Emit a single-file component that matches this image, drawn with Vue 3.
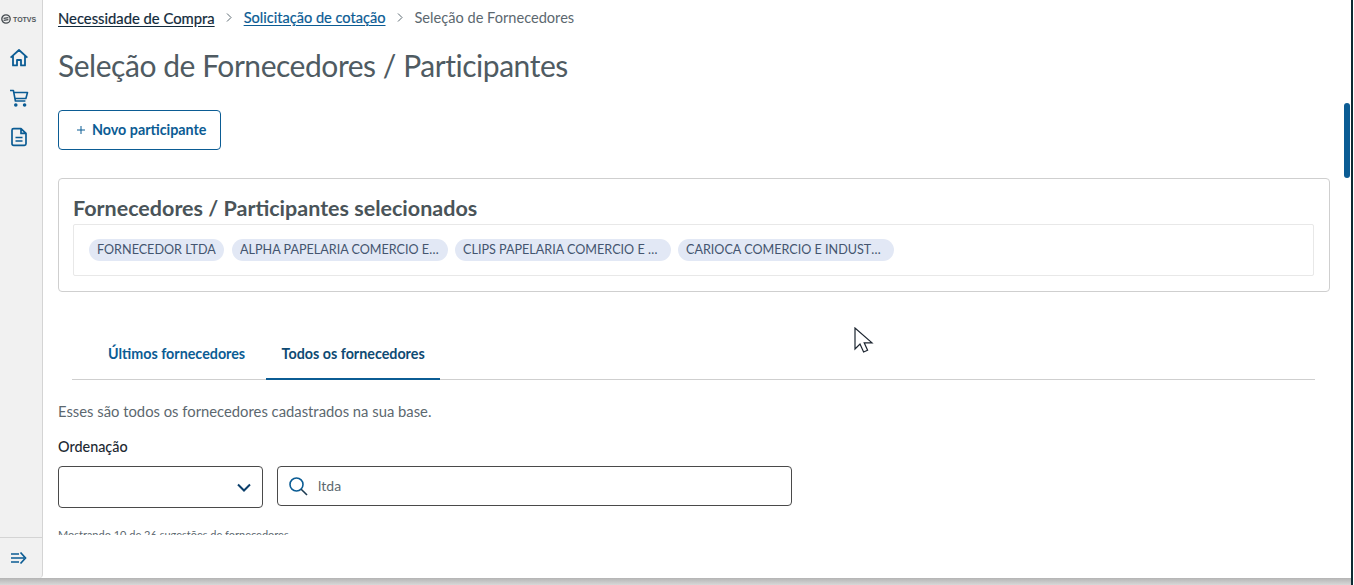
<script setup>
const chips = [
  { label: 'FORNECEDOR LTDA', width: 135 },
  { label: 'ALPHA PAPELARIA COMERCIO E SERVICOS', width: 216 },
  { label: 'CLIPS PAPELARIA COMERCIO E SERVICOS', width: 216 },
  { label: 'CARIOCA COMERCIO E INDUSTRIA LTDA', width: 216 },
]
</script>

<template>
  <div class="screen">
    <div class="window">
      <aside class="sidebar">
        <div class="logo">
          <svg width="10" height="10" viewBox="0 0 10 10" fill="none" stroke="#454b50" stroke-width="1.3">
            <circle cx="5" cy="5" r="4.200" />
            <path d="M2.600 4.400 7.400 3.600M2.600 6.400 7.400 5.600" />
          </svg>
          <span>TOTVS</span>
        </div>
        <nav class="side-nav">
          <a class="side-item">
            <svg width="20" height="20" viewBox="0 0 20 20" fill="none" stroke="#0b5c94" stroke-width="1.8" stroke-linejoin="round">
              <path d="M1.600 9.600 10 2l8.400 7.600M4 8v9.400h4V12h4v5.400h4V8" />
            </svg>
          </a>
          <a class="side-item">
            <svg width="20" height="20" viewBox="0 0 20 20" fill="none" stroke="#0b5c94" stroke-width="1.600" stroke-linejoin="round">
              <path d="M1 2.500h3.400l2 10.500h10M5 4.500h13.500l-1.600 6H6" />
              <circle cx="6.800" cy="17" r="1" fill="#0b5c94" />
              <circle cx="15.600" cy="17" r="1" fill="#0b5c94" />
            </svg>
          </a>
          <a class="side-item side-item-doc">
            <svg width="20" height="20" viewBox="0 0 20 20" fill="none" stroke="#0b5c94" stroke-width="1.700" stroke-linejoin="round">
              <path d="M3 3.200Q3 1.600 4.600 1.600H12L17 6.400v10.400q0 1.600-1.600 1.600H4.600Q3 18.400 3 16.800ZM12 1.600v4.800h5M6.500 10.500h7M6.500 14h7" />
            </svg>
          </a>
        </nav>
        <div class="side-foot">
          <svg width="16" height="14" viewBox="0 0 16 14" fill="none" stroke="#0b5c94" stroke-width="1.700">
            <path d="M0 3h8M0 7h13M0 11h8M9.500 1.500 14.500 7l-5 5.500" />
          </svg>
        </div>
      </aside>

      <main class="content">
        <div class="breadcrumb">
          <a class="crumb crumb-dark">Necessidade de Compra</a>
          <svg class="sep" width="6" height="9" viewBox="0 0 6 9" fill="none" stroke="#5c6a72" stroke-width="1">
            <path d="M1 .5l4 4-4 4" />
          </svg>
          <a class="crumb crumb-link">Solicitação de cotação</a>
          <svg class="sep" width="6" height="9" viewBox="0 0 6 9" fill="none" stroke="#5c6a72" stroke-width="1">
            <path d="M1 .5l4 4-4 4" />
          </svg>
          <span class="crumb-current">Seleção de Fornecedores</span>
        </div>

        <h1 class="page-title">Seleção de Fornecedores / Participantes</h1>

        <button class="btn-new">
          <svg width="8" height="8" viewBox="0 0 8 8" stroke="#0b5c94" stroke-width="1">
            <path d="M4 0v8M0 4h8" />
          </svg>
          Novo participante
        </button>

        <section class="card">
          <h2 class="card-title">Fornecedores / Participantes selecionados</h2>
          <div class="chip-box">
            <span v-for="chip in chips" :key="chip.label" class="chip" :style="{ width: chip.width + 'px' }">
              <span class="chip-text">{{ chip.label }}</span>
            </span>
          </div>
        </section>

        <div class="tabs">
          <a class="tab">Últimos fornecedores</a>
          <a class="tab tab-active">Todos os fornecedores</a>
        </div>

        <p class="desc">Esses são todos os fornecedores cadastrados na sua base.</p>

        <label class="field-label">Ordenação</label>
        <div class="filters">
          <div class="select">
            <svg width="14" height="9" viewBox="0 0 14 9" fill="none" stroke="#0b3f6b" stroke-width="2">
              <path d="M1 1.500l6 6 6-6" />
            </svg>
          </div>
          <div class="search">
            <svg width="20" height="20" viewBox="0 0 20 20" fill="none" stroke="#0b5c94" stroke-width="1.600">
              <circle cx="8.500" cy="8.500" r="6.500" />
              <path d="M13.200 13.200 19 19" stroke="#1d3b52" />
            </svg>
            <span class="search-value">ltda</span>
          </div>
        </div>

        <div class="results-clip">
          <p class="results">Mostrando 10 de 26 sugestões de fornecedores</p>
        </div>
      </main>

      <div class="scroll-thumb"></div>
      <svg class="cursor" width="20" height="28" viewBox="0 0 20 28" fill="#fff" stroke="#1c2530" stroke-width="1.200">
        <path d="M1 1v21l5-5 3.600 8 4-1.800-3.400-7.400H18Z" />
      </svg>
    </div>
    <div class="bottom-shadow"></div>
  </div>
</template>

<style>
html, body {
  margin: 0;
  overflow: hidden;
  background: #fff;
}
</style>

<style scoped>
.screen {
  width: 1354px;
  height: 585px;
  overflow: hidden;
  font-family: "Lato", "Open Sans", sans-serif;
  color: #4a5459;
  position: relative;
}
.window {
  display: flex;
  height: 578px;
  width: 1351px;
  position: relative;
  overflow: hidden;
}
.bottom-shadow {
  height: 7px;
  width: 1351px;
  background: linear-gradient(#b4b4b4, #d8d8d8);
}
.screen::after {
  content: "";
  position: absolute;
  top: 0;
  right: 1px;
  bottom: 0;
  width: 2px;
  background: #0d2a33;
}
.sidebar {
  width: 42px;
  flex: none;
  background: #f1f1f1;
  border-right: 1px solid #d4d4d4;
  border-bottom-right-radius: 4px;
  display: flex;
  flex-direction: column;
}
.logo {
  display: flex;
  align-items: center;
  gap: 2px;
  height: 16px;
  padding: 11px 0 0 1px;
  font-family: "Liberation Sans", sans-serif;
  font-size: 7px;
  font-weight: 700;
  color: #50565b;
}
.side-nav {
  display: flex;
  flex-direction: column;
  align-items: center;
  gap: 20px;
  padding: 21px 0 0 0;
  margin-left: -5px;
}
.side-item {
  display: block;
  height: 20px;
}
.side-item-doc {
  margin-top: -1px;
}
.side-foot {
  margin-top: auto;
  height: 40px;
  border-top: 1px solid #d4d4d4;
  padding: 0 0 0 11px;
  display: flex;
  align-items: center;
}
.content {
  flex: 1;
  padding: 0 0 0 15px;
  min-width: 0;
}
.breadcrumb {
  display: flex;
  align-items: center;
  height: 35px;
  font-size: 14.600px;
}
.crumb {
  text-decoration: underline;
  text-underline-offset: 2px;
}
.crumb-dark {
  font-size: 14.800px;
  color: #12293a;
  -webkit-text-stroke: 0.2px #12293a;
}
.crumb-link {
  color: #0b5c94;
  -webkit-text-stroke: 0.2px #0b5c94;
}
.crumb-current {
  color: #5c686f;
}
.sep {
  margin: 0 12px 0 11px;
}
.page-title {
  margin: 8px 0 0;
  height: 44px;
  line-height: 44px;
  font-size: 30px;
  font-weight: 400;
  letter-spacing: -0.46px;
  color: #4f5b62;
}
.btn-new {
  display: flex;
  align-items: center;
  gap: 7px;
  margin-top: 23px;
  width: 163px;
  height: 40px;
  padding: 0 0 1px 18px;
  background: #fff;
  border: 1px solid #0b5c94;
  border-radius: 4px;
  color: #0b5c94;
  font-family: inherit;
  font-size: 14.300px;
  font-weight: 700;
  box-sizing: border-box;
}
.card {
  margin-top: 28px;
  width: 1272px;
  height: 114px;
  box-sizing: border-box;
  border: 1px solid #cfcfcf;
  border-radius: 4px;
  padding: 15px 15px 0 14px;
}
.card-title {
  margin: 0;
  height: 30px;
  line-height: 28px;
  font-size: 21.500px;
  font-weight: 700;
  color: #4a5459;
}
.chip-box {
  height: 52px;
  box-sizing: border-box;
  border: 1px solid #e8e8e8;
  border-radius: 2px;
  display: flex;
  align-items: center;
  gap: 7px;
  padding: 0 0 0 15px;
}
.chip {
  height: 22px;
  box-sizing: border-box;
  padding: 0 8px;
  border-radius: 11px;
  background: #e2e8f5;
  color: #44556f;
  font-size: 12.600px;
  line-height: 21px;
  flex: none;
}
.chip:first-child {
  margin-right: 1px;
}
.chip-text {
  display: block;
  overflow: hidden;
  white-space: nowrap;
  text-overflow: ellipsis;
}
.tabs {
  display: flex;
  margin: 37px 0 0 14px;
  width: 1243px;
  height: 51px;
  box-sizing: border-box;
  border-bottom: 1px solid #cfcfcf;
  padding-left: 36px;
  gap: 21px;
}
.tab {
  height: 51px;
  box-sizing: border-box;
  line-height: 50px;
  font-size: 14.300px;
  font-weight: 700;
  color: #0b5c94;
}
.tab-active {
  width: 174px;
  text-align: center;
  color: #0e4a73;
  border-bottom: 2px solid #0b5c94;
}
.desc {
  margin: 22px 0 0;
  height: 20px;
  line-height: 18px;
  font-size: 14.800px;
  color: #5c686f;
}
.field-label {
  display: block;
  margin-top: 15px;
  height: 20px;
  line-height: 20px;
  font-size: 14.400px;
  font-weight: 500;
  color: #1d2a33;
}
.filters {
  display: flex;
  align-items: flex-start;
  gap: 14px;
  margin-top: 9px;
}
.select {
  width: 205px;
  height: 42px;
  box-sizing: border-box;
  border: 1px solid #4a4a4a;
  border-radius: 4px;
  display: flex;
  align-items: center;
  justify-content: flex-end;
  padding-right: 11px;
}
.search {
  width: 515px;
  height: 40px;
  box-sizing: border-box;
  border: 1px solid #4a4a4a;
  border-radius: 4px;
  display: flex;
  align-items: center;
  gap: 10px;
  padding-left: 10px;
  font-size: 14px;
  color: #5c686f;
}
.search-value {
  padding-bottom: 1px;
}
.results-clip {
  margin-top: 21px;
  height: 6px;
  overflow: hidden;
}
.results {
  margin: 0;
  font-size: 11px;
  line-height: 12px;
  color: #5c686f;
}
.scroll-thumb {
  position: absolute;
  left: 1344px;
  top: 103px;
  width: 6px;
  height: 75px;
  border-radius: 3px;
  background: #0b5c94;
}
.cursor {
  position: absolute;
  left: 854px;
  top: 327px;
}
</style>
